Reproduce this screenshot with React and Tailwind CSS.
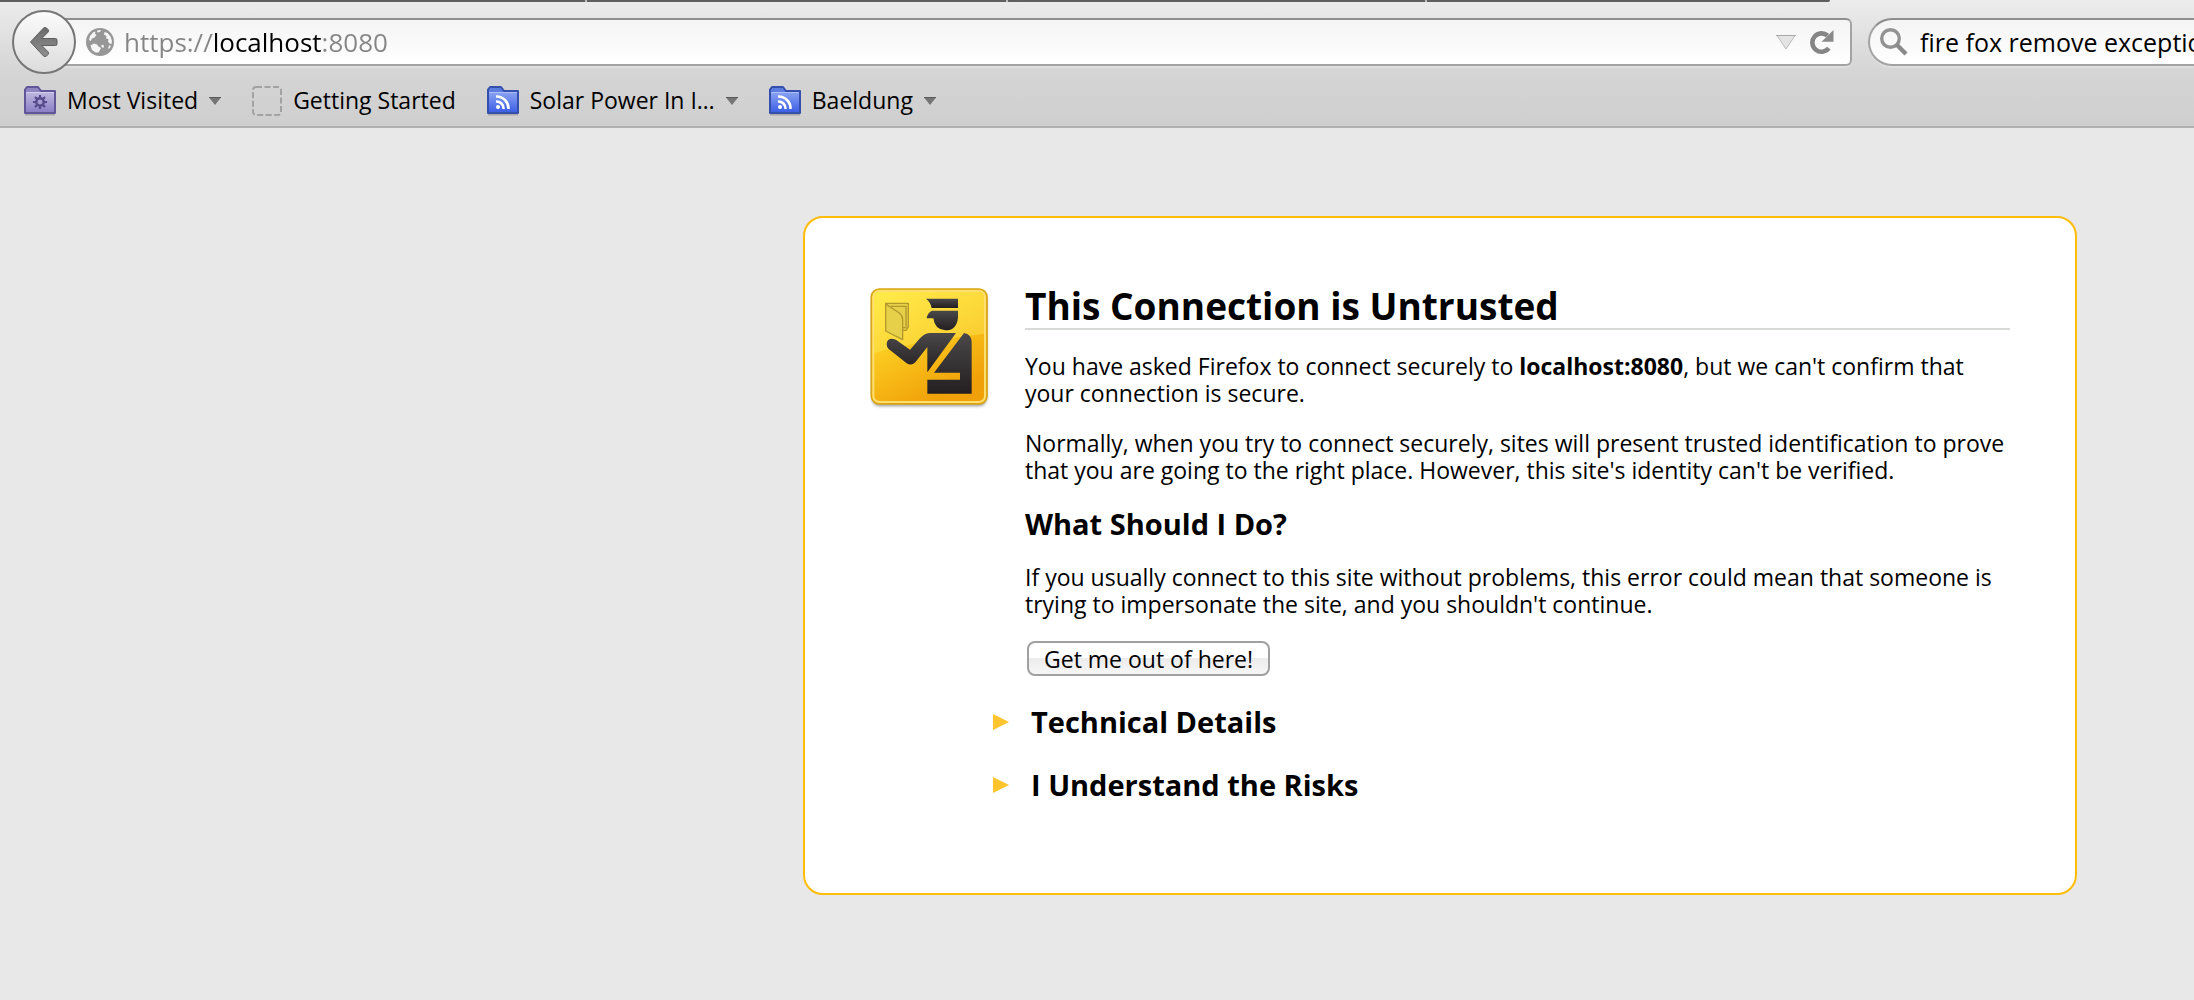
import React from "react";

function BackArrow() {
  return (
    <svg viewBox="0 0 30 32" className="h-8 w-[30px]" aria-hidden="true">
      <defs>
        <linearGradient id="arrow" x1="0" y1="0" x2="0" y2="1">
          <stop offset="0" stopColor="#6b6b6b" />
          <stop offset="1" stopColor="#8f8f8f" />
        </linearGradient>
      </defs>
      <path
        d="M1.5 16 14.3 2.2Q16 .6 17.8 2.2L19 3.4Q20.2 4.800 19 6.200L12.800 12.500H26.500Q28 12.500 28 14V18Q28 19.500 26.500 19.500H12.800L19 25.800Q20.200 27.200 19 28.600L17.800 29.800Q16 31.400 14.300 29.800Z"
        fill="url(#arrow)"
        stroke="#5f5f5f"
        strokeWidth="1"
      />
    </svg>
  );
}

function Globe() {
  return (
    <svg viewBox="0 0 28 28" className="size-7 shrink-0" aria-hidden="true">
      <circle cx="14" cy="14" r="14" fill="#979797" />
      <path
        d="M3 12 4 8 7 4.500 9.500 3.500 9 6 10.500 7 8.500 9.500 6 10.500 4.500 13ZM11 2.500 15 2 14 4 11.500 4.500ZM18.500 4 21.500 5 24.500 8.500 26 13 25.500 16 23.500 15.500 22 13.500 22.500 11 20 10.500 20.500 8 18 6.500ZM4.500 17.500 8 15.500 11 16.500 12.500 18.500 15 20 14 22 12.500 24.500 9.500 24.500 6 22ZM15.500 16.500 18 17.500 17.500 20 15.500 19ZM23 17.500 25 17.500 23.500 20.500 22 20.500Z"
        fill="#f6f6f6"
      />
    </svg>
  );
}

function Reload() {
  return (
    <svg viewBox="0 0 24 26" className="h-[26px] w-6" aria-hidden="true">
      <path d="M18.800 19.200A9.200 9.200 0 1 1 17.600 6.600" fill="none" stroke="#858585" strokeWidth="4.600" />
      <path d="M23.500 1V12.800H11.500Z" fill="#8a8a8a" />
    </svg>
  );
}

function Magnifier() {
  return (
    <svg viewBox="0 0 28 28" className="size-7 shrink-0" aria-hidden="true">
      <circle cx="10.500" cy="10.500" r="8.800" fill="none" stroke="#929292" strokeWidth="3.400" />
      <path d="M16.800 16.800 26 26" stroke="#8a8a8a" strokeWidth="4.400" />
    </svg>
  );
}

function Caret() {
  return (
    <svg viewBox="0 0 12 8" className="h-2 w-3 shrink-0" aria-hidden="true">
      <path d="M0 .5H12L6 8Z" fill="#757575" />
      <path d="M0 .5H12" stroke="#5a5a5a" />
    </svg>
  );
}

function PurpleFolder() {
  return (
    <svg viewBox="0 0 32 30" className="h-[30px] w-8 shrink-0" aria-hidden="true">
      <defs>
        <linearGradient id="purple" x1="0" y1="0" x2="0" y2="1">
          <stop offset="0" stopColor="#bdb6dd" />
          <stop offset="1" stopColor="#8b7fc6" />
        </linearGradient>
      </defs>
      <path d="M1 28.500H31" stroke="#a9a9a9" strokeWidth="2" />
      <path d="M1 27V3.500L3 1H14L17 5H31V27Z" fill="#8f85c0" stroke="#62569a" strokeWidth="2" strokeLinejoin="round" />
      <path d="M2 7H30V26H2Z" fill="url(#purple)" />
      <path d="M2 6.500H30" stroke="#d3cdec" />
      <g stroke="#574b8c" strokeWidth="2.200">
        <path d="M16 9V13M16 19V23M9 16H13M19 16H23M11 11 14 14M18 18 21 21M21 11 18 14M14 18 11 21" />
      </g>
      <circle cx="16" cy="16" r="3.700" fill="none" stroke="#574b8c" strokeWidth="2.400" />
    </svg>
  );
}

function FeedFolder() {
  return (
    <svg viewBox="0 0 32 30" className="h-[30px] w-8 shrink-0" aria-hidden="true">
      <defs>
        <linearGradient id="blue" x1="0" y1="0" x2="0" y2="1">
          <stop offset="0" stopColor="#86a0f2" />
          <stop offset="1" stopColor="#3d5fe4" />
        </linearGradient>
      </defs>
      <path d="M1 28.500H31" stroke="#a9a9a9" strokeWidth="2" />
      <path d="M1 27V3.500L3 1H14L17 5H31V27Z" fill="#5d7ce0" stroke="#3450ac" strokeWidth="2" strokeLinejoin="round" />
      <path d="M2 7H30V26H2Z" fill="url(#blue)" />
      <path d="M2 6.500H30" stroke="#a9bcf6" />
      <circle cx="11" cy="21" r="2" fill="#fff" />
      <path d="M9 15.500A7 7 0 0 1 16.500 23M9 10.500A12 12 0 0 1 21.500 23" fill="none" stroke="#fff" strokeWidth="2.600" />
    </svg>
  );
}

function BlankIcon() {
  return (
    <svg viewBox="0 0 30 30" className="size-[30px] shrink-0" aria-hidden="true">
      <rect x="1" y="1" width="28" height="28" rx="3" fill="none" stroke="#a2a2a2" strokeWidth="2" strokeDasharray="6 2.500" />
    </svg>
  );
}

function OfficerIcon() {
  return (
    <svg viewBox="60 50 360 366" className="mt-1 h-[122px] w-[120px] shrink-0" aria-hidden="true">
      <defs>
        <linearGradient id="gold" x1="0" y1="0" x2=".5" y2="1">
          <stop offset="0" stopColor="#ffe93a" />
          <stop offset=".5" stopColor="#fbc91f" />
          <stop offset="1" stopColor="#f0a008" />
        </linearGradient>
        <linearGradient id="ink" x1="0" y1="0" x2="0" y2="1">
          <stop offset="0" stopColor="#4b484a" />
          <stop offset="1" stopColor="#231f20" />
        </linearGradient>
        <filter id="shade" x="-10%" y="-10%" width="120%" height="120%">
          <feGaussianBlur stdDeviation="4" />
        </filter>
      </defs>
      <rect x="65" y="64" width="346" height="344" rx="24" fill="#777" opacity=".7" filter="url(#shade)" />
      <rect x="64" y="56" width="347" height="345" rx="24" fill="url(#gold)" stroke="#d9a514" strokeWidth="5" />
      <rect x="70" y="62" width="335" height="333" rx="18" fill="none" stroke="#ffdf70" strokeWidth="6" />
      <path d="M73 85Q73 65 92 65H384Q402 65 402 85V190C300 205 180 215 73 248Z" fill="#fff36a" opacity=".35" />
      <g fill="#e6d04a" stroke="#b3982c" strokeWidth="4" strokeLinejoin="round">
        <path d="M107 99H175V170L168 180H155V150Z" />
        <path d="M122 108H168V172H158" fill="none" />
        <path d="M107 101 148 128Q158 136 158 148V208L107 182Z" />
      </g>
      <g fill="url(#ink)">
        <path d="M228 85H324V113H245Q242 96 228 85Z" />
        <path d="M246 121H324V142Q320 180 286 180Q254 178 250 144H230Q232 128 246 121Z" />
        <path d="M110 222Q110 205 126 205Q134 205 140 210L180 238 210 204Q224 188 242 188H318L232 306V230L196 276Q184 288 170 279L116 236Q110 230 110 222Z" />
        <path d="M342 188Q365 192 365 216V370H232V328H330V307H252Z" />
      </g>
    </svg>
  );
}

function Bookmark({ icon, label, menu }) {
  const style = "flex items-center gap-[11px] whitespace-nowrap";
  return menu ? (
    <button type="button" aria-haspopup="menu" className={style}>
      {icon}
      {label}
      <Caret />
    </button>
  ) : (
    <a href="#getting-started" className={style}>
      {icon}
      {label}
    </a>
  );
}

function Expander({ title }) {
  return (
    <h2 className="-ml-8 text-[29px] leading-[34px] font-bold">
      <button type="button" aria-expanded="false" className="flex items-center gap-[22px]">
        <svg viewBox="0 0 16 16" className="size-4" aria-hidden="true">
          <path d="M0 0 16 8 0 16Z" fill="#ffc42e" />
        </svg>
        {title}
      </button>
    </h2>
  );
}

export default function App() {
  return (
    <div className="flex min-h-screen flex-col overflow-hidden bg-[#e8e8e8] font-['Open_Sans',sans-serif] text-[23px] leading-[27px] text-black">
      <header className="border-b-2 border-[#b0b0b0] bg-linear-to-b from-[#ececec] via-[#d4d4d4] via-60% to-[#cfcfcf]">
        <div className="mr-[364px] flex h-0.5 gap-0.5 overflow-hidden rounded-br-full bg-[#bdbdbd]" aria-hidden="true">
          <div className="w-[585px] bg-[#5f5f5f]" />
          <div className="w-[419px] bg-[#5f5f5f]" />
          <div className="w-[417px] bg-[#5f5f5f]" />
          <div className="flex-1 bg-[#5f5f5f]" />
        </div>
        <div className="flex items-center pt-2 pl-3">
          <button
            type="button"
            aria-label="Back"
            className="z-10 flex size-16 shrink-0 items-center justify-center rounded-full border-2 border-[#767676] bg-linear-to-b from-[#fbfbfb] to-[#dcdcdc]"
          >
            <BackArrow />
          </button>
          <div className="-ml-4 flex h-12 min-w-0 flex-1 items-center rounded-r-md border-2 border-[#a3a3a3] border-t-[#8e8e8e] bg-linear-to-b from-[#f4f4f4] to-white pr-4 pl-6 shadow-[0_2px_0_#dedede]">
            <Globe />
            <input
              type="text"
              aria-label="Address"
              defaultValue="https://localhost:8080"
              className="ml-[10px] h-10 min-w-0 flex-1 bg-[linear-gradient(90deg,#858585_88px,#000_88px,#000_197px,#858585_197px)] bg-clip-text text-[26px] text-transparent caret-black outline-none"
            />
            <button type="button" aria-label="Show history" className="mr-[14px]">
              <svg viewBox="0 0 20 15" className="h-[15px] w-5" aria-hidden="true">
                <path d="M1 .5H19L10 14Z" fill="#e4e4e4" stroke="#bcbcbc" />
                <path d="M0 .5H20" stroke="#a8a8a8" />
              </svg>
            </button>
            <button type="button" aria-label="Reload">
              <Reload />
            </button>
          </div>
          <div className="ml-4 flex h-12 w-[326px] shrink-0 items-center gap-3 rounded-l-full border-2 border-r-0 border-[#a3a3a3] border-t-[#8e8e8e] bg-linear-to-b from-[#f4f4f4] to-white pl-[10px] shadow-[0_2px_0_#dedede]">
            <Magnifier />
            <input
              type="text"
              aria-label="Search"
              defaultValue="fire fox remove exception"
              className="h-10 min-w-0 flex-1 bg-transparent text-[25px] outline-none"
            />
          </div>
        </div>
        <nav aria-label="Bookmarks" className="flex h-[52px] items-center gap-[31px] pt-px pl-6">
          <Bookmark icon={<PurpleFolder />} label="Most Visited" menu />
          <Bookmark icon={<BlankIcon />} label="Getting Started" />
          <Bookmark icon={<FeedFolder />} label="Solar Power In I…" menu />
          <Bookmark icon={<FeedFolder />} label="Baeldung" menu />
        </nav>
      </header>

      <main className="mt-[88px] mr-[117px] mb-24 ml-[803px] flex items-start gap-[35px] rounded-[20px] border-2 border-[#ffbd09] bg-white px-[65px] pt-[65px] pb-[91px]">
        <OfficerIcon />
        <div className="flex min-w-0 flex-1 flex-col gap-[23px]">
          <h1 className="border-b-2 border-[#d8dad8] text-[37px] leading-[45px] font-bold">This Connection is Untrusted</h1>
          <p>
            You have asked Firefox to connect securely to <b>localhost:8080</b>, but we can't confirm that your connection is
            secure.
          </p>
          <p>
            Normally, when you try to connect securely, sites will present trusted identification to prove that you are going
            to the right place. However, this site's identity can't be verified.
          </p>
          <h2 className="text-[29px] leading-[34px] font-bold">What Should I Do?</h2>
          <p>
            If you usually connect to this site without problems, this error could mean that someone is trying to impersonate
            the site, and you shouldn't continue.
          </p>
          <button
            type="button"
            className="ml-0.5 h-[35px] self-start rounded-lg border-2 border-[#a0a0a0] bg-linear-to-b from-white from-50% via-[#ececec] via-50% to-[#f6f6f6] px-[15px] leading-[30px]"
          >
            Get me out of here!
          </button>
          <div className="mt-1.5 flex flex-col gap-[29px]">
            <Expander title="Technical Details" />
            <Expander title="I Understand the Risks" />
          </div>
        </div>
      </main>
    </div>
  );
}
